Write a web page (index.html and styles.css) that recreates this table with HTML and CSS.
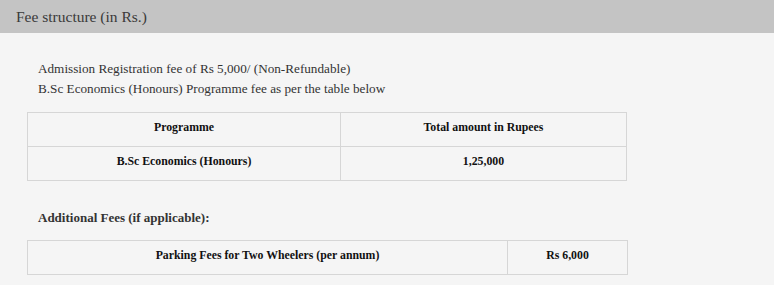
FILE: index.html
```html
<!DOCTYPE html>
<html>
<head>
<meta charset="utf-8">
<link rel="stylesheet" href="styles.css">
</head>
<body>
<div class="panel">
  <div class="panel-head">Fee structure (in Rs.)</div>
  <div class="panel-body">
    <p class="intro">Admission Registration fee of Rs 5,000/ (Non-Refundable)<br>B.Sc Economics (Honours) Programme fee as per the table below</p>
    <table class="fee-table">
      <tr><th class="c1">Programme</th><th class="c2">Total amount in Rupees</th></tr>
      <tr><td class="c1">B.Sc Economics (Honours)</td><td class="c2">1,25,000</td></tr>
    </table>
    <p class="sub">Additional Fees (if applicable):</p>
    <table class="fee-table">
      <tr><td class="d1">Parking Fees for Two Wheelers (per annum)</td><td class="d2">Rs 6,000</td></tr>
    </table>
  </div>
</div>
</body>
</html>
```
FILE: styles.css
```css
html, body { margin: 0; padding: 0; background: #f5f5f5; }
body { font-family: "Liberation Serif", "Times New Roman", serif; color: #333; }
.panel-head {
  background: #c4c4c4;
  height: 33px;
  line-height: 34px;
  padding-left: 16px;
  font-size: 15.5px;
  color: #3a3a3a;
}
.panel-body { padding: 26px 0 0 27px; }
.intro {
  margin: 0 0 0 11px;
  font-size: 13.2px;
  line-height: 20px;
  color: #333;
}
.fee-table {
  border-collapse: collapse;
  margin-top: 13px;
  font-size: 11.8px;
  font-weight: bold;
  color: #111;
}
.fee-table th, .fee-table td {
  border: 1px solid #d6d6d6;
  text-align: center;
  vertical-align: top;
  padding: 7px 4px 0;
  height: 26px;
}
.c1 { width: 304px; }
.c2 { width: 277px; }
.d1 { width: 471px; }
.d2 { width: 111px; }
.sub {
  margin: 29px 0 0 11px;
  font-size: 13px;
  font-weight: bold;
  color: #333;
}
.sub + .fee-table { margin-top: 14px; }
```
